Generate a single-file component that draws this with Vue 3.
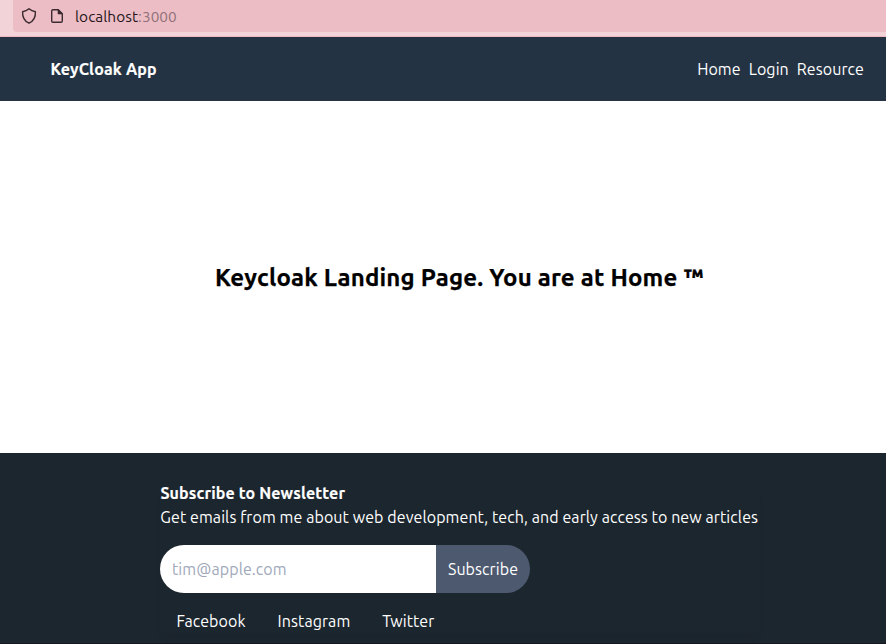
<script setup>
const navLinks = ['Home', 'Login', 'Resource']
const socialLinks = ['Facebook', 'Instagram', 'Twitter']
</script>

<template>
  <div class="page">
    <div class="browser-bar">
      <div class="address">
        <svg class="shield" viewBox="0 0 16 18" width="16" height="18">
          <path d="M8 1.7 C9.8 3.2 12 4.2 14.4 4.7 C14.7 9.8 12.6 14 8 16.2 C3.4 14 1.3 9.8 1.6 4.7 C4 4.2 6.2 3.2 8 1.7 Z" />
        </svg>
        <svg class="doc" viewBox="0 0 14 16" width="14" height="16">
          <path d="M3 1.7 H8.3 L12.3 5.7 V13 Q12.3 14.3 11 14.3 H3 Q1.7 14.3 1.7 13 V3 Q1.7 1.7 3 1.7 Z" />
          <path class="fold" d="M8 1.5 V6 H12.5 Z" />
        </svg>
        <span class="host">localhost</span><span class="port">:3000</span>
      </div>
    </div>
    <header class="navbar">
      <strong class="brand">KeyCloak App</strong>
      <nav class="nav-links">
        <a v-for="link in navLinks" :key="link">{{ link }}</a>
      </nav>
    </header>
    <main class="hero">
      <h1>Keycloak Landing Page. You are at Home ™</h1>
    </main>
    <footer class="footer">
      <section class="newsletter">
        <h2>Subscribe to Newsletter</h2>
        <p>Get emails from me about web development, tech, and early access to new articles</p>
        <form class="form" @submit.prevent>
          <input type="email" placeholder="tim@apple.com" />
          <button>Subscribe</button>
        </form>
        <div class="social">
          <a v-for="link in socialLinks" :key="link">{{ link }}</a>
        </div>
      </section>
    </footer>
  </div>
</template>

<style>
body { background: #fff; overflow: hidden; }
</style>

<style scoped>
* { box-sizing: border-box; }
.page {
  width: 886px;
  height: 644px;
  display: flex;
  flex-direction: column;
  font: 16px/24px Ubuntu, "Noto Sans", sans-serif;
  letter-spacing: .085px;
  color: #fff;
  white-space: nowrap;
  overflow: hidden;
}
.browser-bar {
  height: 37px;
  flex: none;
  padding-left: 13px;
  background: #f1d3d8;
  border-bottom: 1px solid #f0b9c2;
}
.address {
  height: 32px;
  display: flex;
  align-items: center;
  padding-left: 8px;
  background: #edbdc5;
  border-radius: 0 0 0 4px;
  color: #24161a;
  font-size: 15.4px;
  letter-spacing: .05px;
}
svg { fill: none; stroke: #3b2a2f; stroke-width: 1.4; stroke-linejoin: round; }
.doc { margin: 0 11px 0 13px; }
.doc .fold { fill: #3b2a2f; stroke-width: .6; }
.host, .port { position: relative; top: 1px; }
.port { color: #8f7278; }
.navbar {
  height: 64px;
  flex: none;
  display: flex;
  align-items: center;
  justify-content: space-between;
  padding: 0 22px 0 50.4px;
  background: #243343;
}
.brand { font-weight: 700; letter-spacing: .17px; -webkit-text-stroke: .15px #fff; }
.nav-links { display: flex; gap: 8px; }
.hero {
  height: 352px;
  flex: none;
  display: flex;
  align-items: center;
  padding: 2px 0 0 215px;
  color: #000;
}
h1 { margin: 0; font-size: 24px; line-height: 32px; font-weight: 700; letter-spacing: .19px; -webkit-text-stroke: .25px #000; }
.footer {
  flex: 1;
  padding: 28px 0 0 160px;
  background: #1c262e;
  border-bottom: 1px solid #14181e;
}
.newsletter { width: 600px; height: 152px; box-shadow: 0 10px 10px -5px rgba(0, 0, 0, .06); }
h2 { margin: 0 0 0 .4px; font-size: 16px; line-height: 24px; font-weight: 700; letter-spacing: .13px; -webkit-text-stroke: .15px #fff; }
p { margin: 0 0 0 .3px; }
.form { display: flex; height: 48px; margin: 16px 0; }
input {
  width: 276px;
  padding: 0 12px;
  border: 0;
  border-radius: 24px 0 0 24px;
  background: #fff;
  font: inherit;
  letter-spacing: .085px;
}
input::placeholder { color: #a0a9ba; opacity: 1; }
button {
  width: 94px;
  padding: 0;
  border: 0;
  border-radius: 0 24px 24px 0;
  background: #4c596f;
  color: #fff;
  font: inherit;
  letter-spacing: .085px;
}
.social { display: flex; gap: 32px; padding-left: 16.5px; }
</style>
